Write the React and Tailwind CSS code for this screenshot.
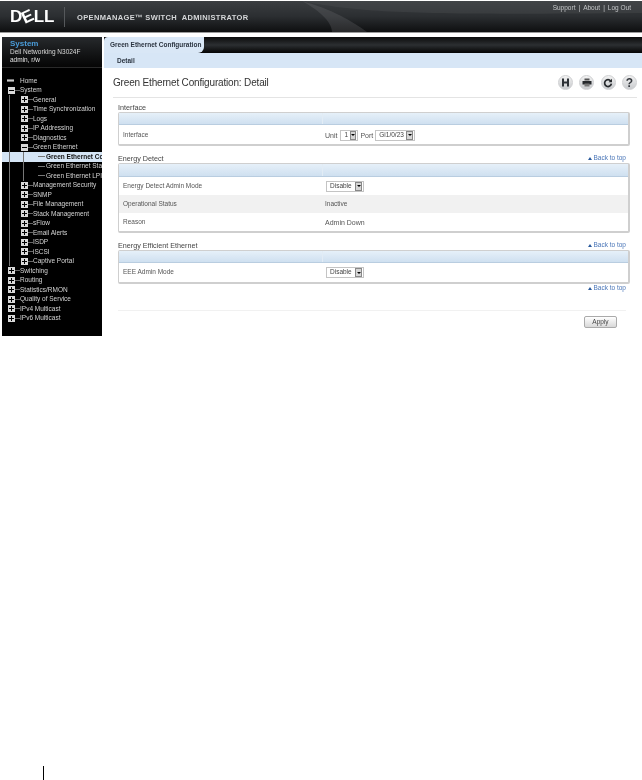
import React from 'react';

const treeItems = [
  { level: 0, label: 'System', box: 'minus' },
  { level: 1, label: 'General', box: 'plus' },
  { level: 1, label: 'Time Synchronization', box: 'plus' },
  { level: 1, label: 'Logs', box: 'plus' },
  { level: 1, label: 'IP Addressing', box: 'plus' },
  { level: 1, label: 'Diagnostics', box: 'plus' },
  { level: 1, label: 'Green Ethernet', box: 'minus' },
  { level: 2, label: 'Green Ethernet Configuration', selected: true },
  { level: 2, label: 'Green Ethernet Statistics' },
  { level: 2, label: 'Green Ethernet LPI History' },
  { level: 1, label: 'Management Security', box: 'plus' },
  { level: 1, label: 'SNMP', box: 'plus' },
  { level: 1, label: 'File Management', box: 'plus' },
  { level: 1, label: 'Stack Management', box: 'plus' },
  { level: 1, label: 'sFlow', box: 'plus' },
  { level: 1, label: 'Email Alerts', box: 'plus' },
  { level: 1, label: 'ISDP', box: 'plus' },
  { level: 1, label: 'iSCSI', box: 'plus' },
  { level: 1, label: 'Captive Portal', box: 'plus' },
  { level: 0, label: 'Switching', box: 'plus' },
  { level: 0, label: 'Routing', box: 'plus' },
  { level: 0, label: 'Statistics/RMON', box: 'plus' },
  { level: 0, label: 'Quality of Service', box: 'plus' },
  { level: 0, label: 'IPv4 Multicast', box: 'plus' },
  { level: 0, label: 'IPv6 Multicast', box: 'plus' },
];

const TreeBox = ({ type }) => (
  <span className="relative w-[7px] h-[7px] shrink-0 bg-[#d8d8d8] flex items-center justify-center">
    <span className="w-[5px] h-px bg-black" />
    {type === 'plus' && <span className="absolute w-px h-[5px] bg-black" />}
  </span>
);

const TreeRow = ({ item, open }) => {
  const { level, label, box, selected } = item;
  return (
    <div className={`flex items-center h-[9.5px] pl-[5px] overflow-hidden ${selected ? 'bg-[#d5e5f5] text-[#111] font-bold' : 'text-[#d4d4d4]'}`}>
      {level === 0 && (
        <>
          <span className="ml-px"><TreeBox type={box} /></span>
          <span className="w-[5px] h-px bg-[#666] shrink-0" />
        </>
      )}
      {level > 0 && (
        <>
          <span className={`ml-[2px] w-px h-full shrink-0 ${open ? 'bg-[#777]' : ''}`} />
          {level === 1 && (
            <>
              <span className="w-[11px] shrink-0" />
              <TreeBox type={box} />
              <span className="w-[5px] h-px bg-[#666] shrink-0" />
            </>
          )}
          {level === 2 && (
            <>
              <span className="w-[13px] shrink-0" />
              <span className="w-px h-full bg-[#777] shrink-0" />
              <span className="w-[14px] shrink-0" />
              <span className="w-[7px] h-px bg-[#777] shrink-0 mr-px" />
            </>
          )}
        </>
      )}
      <span className="text-[6.5px] leading-none whitespace-nowrap">{label}</span>
    </div>
  );
};

const Sidebar = () => (
  <aside className="w-[100px] ml-[2px] h-[299px] bg-black shrink-0 overflow-hidden">
    <div className="h-[31px] pl-[8px] pt-[2px] bg-gradient-to-b from-[#272a2d] to-[#060606] border-b border-[#2a2a2a]">
      <div className="text-[8px] leading-[9px] font-bold text-[#4a9bd8]">System</div>
      <div className="text-[6.5px] leading-[8px] text-[#d8d8d8] whitespace-nowrap">Dell Networking N3024F</div>
      <div className="text-[6.5px] leading-[8px] text-[#e4e4e4]">admin, r/w</div>
    </div>
    <div className="pt-[8px]">
      <div className="flex items-center h-[9.5px] pl-[5px] text-[#d4d4d4]">
        <span className="w-[7px] h-[3px] bg-[#ccc] border-y border-[#777] mr-[6px]" />
        <span className="text-[6.5px] leading-none">Home</span>
      </div>
      {treeItems.map((item, i) => (
        <TreeRow key={item.label} item={item} open={i < 19} />
      ))}
    </div>
  </aside>
);

const ToolIcon = ({ children }) => (
  <span className="w-[15px] h-[15px] rounded-full bg-gradient-to-b from-[#f2f2f2] to-[#c9cbce] border border-[#cfd0d2] flex items-center justify-center">
    {children}
  </span>
);

const ToolIcons = () => (
  <div className="flex gap-[6.5px]">
    <ToolIcon>
      <svg width="9" height="9" viewBox="0 0 9 9"><path d="M1 0.5h2v3h3v-3h2v8H6V5.5H3v3H1z" fill="#2d3136" /></svg>
    </ToolIcon>
    <ToolIcon>
      <svg width="10" height="9" viewBox="0 0 10 9"><path d="M2.5 0.5h5v2h-5z" fill="#555" /><path d="M0.5 3h9v3.5h-9z" fill="#26292c" /><path d="M2.5 5.5h5v3h-5z" fill="#777" /></svg>
    </ToolIcon>
    <ToolIcon>
      <svg width="10" height="10" viewBox="0 0 10 10" fill="none"><path d="M7.7 3A3.4 3.4 0 1 0 8.4 5.6" stroke="#26292c" strokeWidth="1.7" /><path d="M9 0.8v3.4H5.6z" fill="#26292c" /></svg>
    </ToolIcon>
    <ToolIcon>
      <span className="text-[12px] leading-none font-bold text-[#34383d]">?</span>
    </ToolIcon>
  </div>
);

const Select = ({ value, width }) => (
  <span className={`inline-flex items-center justify-between h-[11px] border border-[#c4c4c4] bg-white pl-[3px] pr-px gap-[2px] ${width}`}>
    <span className="text-[6.5px] leading-none text-[#444] whitespace-nowrap">{value}</span>
    <span className="w-[7px] h-[9px] bg-[#d6d6d6] border border-[#888] flex items-center justify-center">
      <span className="border-x-[2px] border-t-[2px] border-x-transparent border-t-black" />
    </span>
  </span>
);

const BackToTop = () => (
  <a className="flex items-center gap-[1px] text-[6.5px] leading-none text-[#4a76b8] whitespace-nowrap">
    <span className="border-x-[2px] border-b-[3px] border-x-transparent border-b-[#2a5a9c]" />
    Back to top
  </a>
);

const SectionTitle = ({ title, back }) => (
  <div className="flex items-center justify-between h-[10px] pt-px pr-[16px]">
    <span className="text-[7.2px] leading-none text-[#444]">{title}</span>
    {back && <BackToTop />}
  </div>
);

const Row = ({ label, h, shaded, children }) => (
  <div className={`flex items-center ${h} ${shaded ? 'bg-[#f1f1f1]' : 'bg-white'}`}>
    <div className="w-[204px] pl-[4px] text-[6.5px] leading-none text-[#555]">{label}</div>
    <div className="flex items-center gap-[2px] pl-[2px] text-[7px] leading-none text-[#555]">{children}</div>
  </div>
);

const Table = ({ children, head }) => (
  <div className="mr-[12px] border border-[#cfcfcf] border-b-2 border-r-2 rounded-[2px] overflow-hidden">
    <div className={`${head} flex bg-gradient-to-b from-[#e6f0f9] to-[#cfe0f0] border-b border-[#b9cde0]`}>
      <div className="w-[204px] border-r border-[#e2ecf5]" />
    </div>
    {children}
  </div>
);

const Content = () => (
  <main className="flex-1 min-w-0 ml-[2px]">
    <div className="h-[16px] flex bg-gradient-to-b from-[#0c0c0c] via-[#2c2f32] to-[#060606]">
      <div className="w-[100px] rounded-tl-[4px] rounded-br-[6px] bg-[#d9e7f6] pl-[6px] text-[6.5px] font-bold leading-[16px] text-[#2b3440] whitespace-nowrap overflow-hidden">
        Green Ethernet Configuration
      </div>
    </div>
    <div className="h-[15px] bg-[#d7e6f6] pl-[13px] text-[6.5px] font-bold leading-[15px] text-[#2b3440]">Detail</div>
    <div className="flex items-center justify-between h-[30px] ml-[9px] mr-[5px] border-b border-[#e4e4e4]">
      <h1 className="text-[10px] leading-none text-[#333] tracking-[-0.17px]">Green Ethernet Configuration: Detail</h1>
      <ToolIcons />
    </div>
    <div className="pl-[14px] pt-[4px]">
      <SectionTitle title="Interface" />
      <Table head="h-[12px]">
        <Row label="Interface" h="h-[19px] pt-px">
          <span>Unit</span>
          <Select value="1" width="w-[18px] ml-px" />
          <span>Port</span>
          <Select value="Gi1/0/23" width="w-[40px]" />
        </Row>
      </Table>
      <div className="h-[7px]" />
      <SectionTitle title="Energy Detect" back />
      <Table head="h-[13px]">
        <Row label="Energy Detect Admin Mode" h="h-[18px]">
          <span className="ml-[1px]"><Select value="Disable" width="w-[38px]" /></span>
        </Row>
        <Row label="Operational Status" h="h-[18px] pt-px" shaded><span className="text-[6.5px]">Inactive</span></Row>
        <Row label="Reason" h="h-[18px]">Admin Down</Row>
      </Table>
      <div className="h-[7px]" />
      <SectionTitle title="Energy Efficient Ethernet" back />
      <Table head="h-[12px]">
        <Row label="EEE Admin Mode" h="h-[19px]">
          <span className="ml-[1px]"><Select value="Disable" width="w-[38px]" /></span>
        </Row>
      </Table>
      <div className="flex justify-end pr-[16px] h-[8px] items-center">
        <BackToTop />
      </div>
      <div className="mt-[18px] mr-[16px] border-t border-[#f1f1f1] flex justify-end pr-[9px] pt-[5px]">
        <button className="w-[33px] h-[12px] rounded-[2px] border border-[#aaa] bg-gradient-to-b from-white to-[#d8d8d8] text-[6.5px] leading-none text-[#444]">
          Apply
        </button>
      </div>
    </div>
  </main>
);

const Header = () => (
  <header className="relative h-[32px] border-b-[1px] border-[#9a9a9a] bg-gradient-to-b from-[#3b3e41] via-[#2b2e31] to-[#0e0f10] overflow-hidden">
    <svg className="absolute right-0 top-0" width="340" height="31" viewBox="0 0 340 31">
      <path d="M0 0 C60 12 110 14 340 12 L340 0Z" fill="#4a4d50" opacity="0.4" />
      <path d="M0 0 C30 8 50 20 65 31 L30 31 C30 20 15 8 0 0Z" fill="#77797b" opacity="0.25" />
    </svg>
    <div className="relative flex items-center h-full pl-[10px]">
      <span className="flex items-center w-[43px] text-[17px] leading-none font-bold text-white mt-[-1px]">
        D<span className="inline-block rotate-[-25deg]">E</span>LL
      </span>
      <span className="w-px h-[20px] bg-[#55585b] ml-[11px]" />
      <span className="ml-[12px] mt-[2px] text-[7.5px] leading-none font-bold text-[#d5d7d9] tracking-[0.35px] whitespace-nowrap">
        OPENMANAGE™ SWITCH&nbsp; ADMINISTRATOR
      </span>
    </div>
    <div className="absolute right-[11px] top-[4px] flex gap-[3px] text-[6.5px] leading-none text-[#c5c7c9]">
      <span>Support</span><span>|</span><span>About</span><span>|</span><span>Log Out</span>
    </div>
  </header>
);

export default function App() {
  return (
    <div className="w-[642px] h-[780px] bg-white overflow-hidden blur-[0.3px] font-['Liberation_Sans',Arial,sans-serif]">
      <div className="pt-px"><Header /></div>
      <div className="flex mt-[4px]">
        <Sidebar />
        <Content />
      </div>
      <div className="mt-[430px] ml-[43px] w-px h-[14px] bg-black" />
    </div>
  );
}
